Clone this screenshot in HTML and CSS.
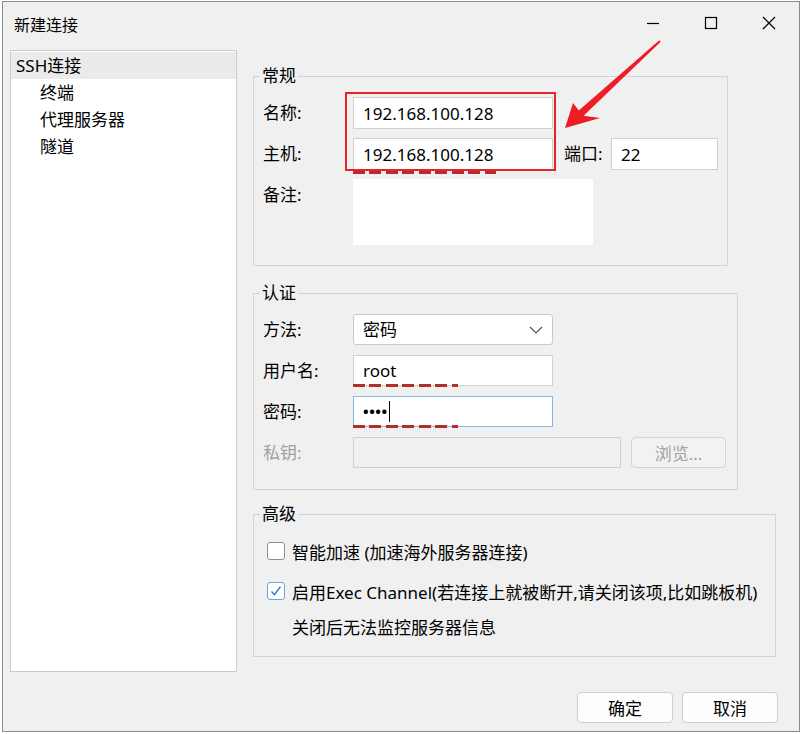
FILE: index.html
```html
<!DOCTYPE html>
<html lang="zh-CN">
<head>
  <meta charset="UTF-8">
  <title>新建连接</title>
  <link rel="stylesheet" href="styles.css">
</head>
<body>
  <div class="window">
    <!-- title bar -->
    <div class="titlebar">
      <span class="title">新建连接</span>
      <div class="caption">
        <span class="cap-btn">
          <svg width="14" height="14" viewBox="0 0 14 14"><path d="M1 7.5h12" stroke="#000" stroke-width="1.2" fill="none"/></svg>
        </span>
        <span class="cap-btn">
          <svg width="14" height="14" viewBox="0 0 14 14"><rect x="1.5" y="1.5" width="11" height="11" stroke="#000" stroke-width="1.2" fill="none"/></svg>
        </span>
        <span class="cap-btn">
          <svg width="14" height="14" viewBox="0 0 14 14"><path d="M1 1l12 12M13 1L1 13" stroke="#000" stroke-width="1.2" fill="none"/></svg>
        </span>
      </div>
    </div>

    <div class="content">
      <!-- left tree -->
      <ul class="tree">
        <li class="selected">SSH连接</li>
        <li class="child">终端</li>
        <li class="child">代理服务器</li>
        <li class="child">隧道</li>
      </ul>

      <div class="pane">
        <!-- 常规 -->
        <fieldset class="group g-general">
          <legend>常规</legend>
          <div class="group-body body-general">
            <div class="row">
              <span class="lbl">名称:</span>
              <div class="field">192.168.100.128</div>
            </div>
            <div class="row">
              <span class="lbl">主机:</span>
              <div class="field">192.168.100.128<span class="mark mark-host"></span></div>
              <span class="port-lbl">端口:</span>
              <div class="field port">22</div>
            </div>
            <div class="row row-top">
              <span class="lbl">备注:</span>
              <div class="memo"></div>
            </div>
            <span class="red-box"></span>
          </div>
        </fieldset>

        <!-- 认证 -->
        <fieldset class="group g-auth">
          <legend>认证</legend>
          <div class="group-body body-auth">
            <div class="row">
              <span class="lbl">方法:</span>
              <div class="field select">密码
                <svg class="chev" width="14" height="8" viewBox="0 0 14 8"><path d="M1 1l6 6 6-6" stroke="#555" stroke-width="1.2" fill="none"/></svg>
              </div>
            </div>
            <div class="row">
              <span class="lbl">用户名:</span>
              <div class="field">root<span class="mark mark-short"></span></div>
            </div>
            <div class="row">
              <span class="lbl">密码:</span>
              <div class="field focus"><span class="dots">••••</span><span class="caret"></span><span class="mark mark-short"></span></div>
            </div>
            <div class="row">
              <span class="lbl disabled">私钥:</span>
              <div class="field key disabled-field"></div>
              <span class="btn browse">浏览...</span>
            </div>
          </div>
        </fieldset>

        <!-- 高级 -->
        <fieldset class="group g-adv">
          <legend>高级</legend>
          <div class="group-body body-adv">
            <div class="check-row">
              <span class="box"></span>
              <span>智能加速 (加速海外服务器连接)</span>
            </div>
            <div class="check-row row-exec">
              <span class="box checked">
                <svg width="14" height="14" viewBox="0 0 14 14"><path d="M2.5 7.5l3 3.2 6-8" stroke="#2f72c4" stroke-width="1.4" fill="none"/></svg>
              </span>
              <span>启用Exec Channel(若连接上就被断开,请关闭该项,比如跳板机)</span>
            </div>
            <div class="note">关闭后无法监控服务器信息</div>
          </div>
        </fieldset>
      </div>
    </div>

    <div class="footer">
      <span class="btn">确定</span>
      <span class="btn">取消</span>
    </div>

    <!-- annotation arrow -->
    <svg class="arrow" width="798" height="160" viewBox="0 0 798 160">
      <polygon points="562,126 570,101 575.8,108.6 656.3,38.3 657.7,39.7 580.6,113.7 597,116" fill="#ee1c25"/>
    </svg>
  </div>
</body>
</html>
```

FILE: styles.css
```css
* { box-sizing: border-box; }
body { margin: 0; background: #fff; font-family: "Noto Sans", "Noto Sans CJK SC", sans-serif; font-size: 17px; color: #000; }

.window {
  position: relative;
  width: 798px;
  height: 731px;
  margin: 1px 0 0 2px;
  border: 1px solid #8c8c8c;
  background: #f0f0f0;
  display: flex;
  flex-direction: column;
}

/* title bar */
.titlebar { height: 48px; flex: none; display: flex; justify-content: space-between; align-items: flex-start; }
.title { padding: 12px 0 0 11px; font-size: 16px; line-height: 22px; }
.caption { display: flex; margin-right: 1px; }
.cap-btn { width: 58px; height: 42px; display: flex; align-items: center; justify-content: center; }

/* main area */
.content { display: flex; height: 622px; flex: none; padding-left: 7px; }
.tree { width: 227px; height: 622px; margin: 0; padding: 1px 0 0; list-style: none; background: #fff; border: 1px solid #cbcbcb; }
.tree li { height: 27px; line-height: 28px; padding-left: 5px; }
.tree li.selected { background: #ebebeb; }
.tree li.child { padding-left: 29px; }

.pane { margin-left: 16px; }

.group { margin: 16px 0 0; padding: 0; border: 1px solid #d3d3d3; min-width: 0; }
.group legend { margin-left: 6px; padding: 0 2px; line-height: 20px; }
.g-general { width: 475px; }
.g-auth { width: 485px; margin-top: 17px; }
.g-adv { width: 523px; margin-top: 14px; }

.group-body { position: relative; }
.body-general { padding: 11px 0 20px 9px; }
.body-auth { padding: 11px 0 21px 9px; }
.body-adv { padding: 15px 0 16px 13px; }

.row { display: flex; align-items: center; }
.body-general .row + .row { margin-top: 9px; }
.body-general .row-top { margin-top: 10px; align-items: flex-start; }
.body-general .row-top .lbl { padding-top: 4px; }
.body-auth .row + .row { margin-top: 10px; }

.lbl { width: 90px; flex: none; line-height: 24px; }
.lbl.disabled { color: #a0a0a0; }
.port-lbl { width: 47px; margin-left: 11px; line-height: 24px; }

.field {
  position: relative;
  width: 200px;
  height: 32px;
  padding: 0 9px;
  line-height: 31px;
  background: #fff;
  border: 1px solid #d0d0d0;
}
.body-auth .field { height: 31px; line-height: 30px; }
.field.port { width: 107px; }
.field.select { border-color: #c9c9c9; border-radius: 3px; }
.field.focus { border-color: #8ab6e4; display: flex; align-items: center; }
.field.key { width: 268px; }
.disabled-field { background: #f0f0f0; border-color: #cfcfcf; }

.chev { position: absolute; right: 9px; top: 11px; }
.dots { font-size: 15px; font-weight: bold; letter-spacing: 0.5px; line-height: 29px; }
.caret { width: 1px; height: 21px; background: #000; margin-left: 1px; }

.memo { width: 240px; height: 66px; background: #fff; }

/* red annotations drawn over the form */
.red-box { position: absolute; left: 91px; top: 6px; width: 211px; height: 79px; border: 2px solid #e8222b; }
.mark {
  position: absolute;
  left: -1px;
  height: 3px;
  background: repeating-linear-gradient(90deg, #b22f2c 0 12px, transparent 12px 16.5px);
}
.mark-host { width: 143px; bottom: -5px; }
.mark-short { width: 105px; bottom: -2px; }

.arrow { position: absolute; left: 0; top: 0; pointer-events: none; }

/* buttons */
.btn {
  display: inline-flex;
  align-items: center;
  justify-content: center;
  width: 96px;
  height: 31px;
  background: #fdfdfd;
  border: 1px solid #cfcfcf;
  border-radius: 4px;
}
.browse { width: 95px; margin-left: 10px; background: #f2f2f2; color: #a3a3a3; border-color: #d4d4d4; }

/* checkbox rows */
.check-row { display: flex; align-items: center; height: 24px; }
.row-exec { margin-top: 16px; }
.box {
  width: 18px;
  height: 18px;
  margin-right: 7px;
  background: #fff;
  border: 1px solid #8f8f8f;
  border-radius: 3px;
  display: flex;
  align-items: center;
  justify-content: center;
}
.box.checked { border-color: #6fa3dc; }
.note { margin-top: 13px; padding-left: 25px; line-height: 24px; }

.footer { display: flex; justify-content: flex-end; gap: 9px; padding: 20px 21px 0 0; }
```
